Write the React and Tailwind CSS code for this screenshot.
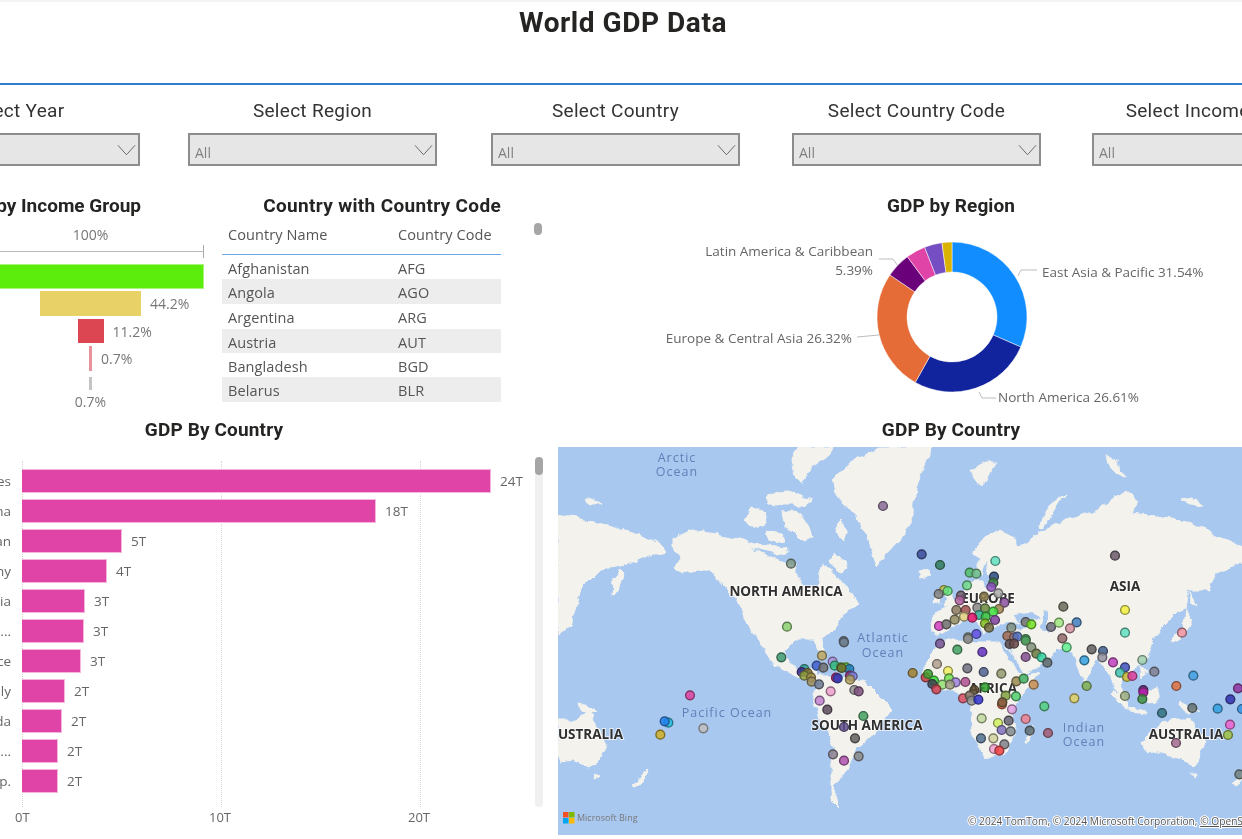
const din = "font-['Roboto','Liberation_Sans',sans-serif]";

const slicers = [
  { label: 'Select Year', cls: 'ml-[-109px]', all: false },
  { label: 'Select Region', cls: 'ml-[48px]', all: true },
  { label: 'Select Country', cls: 'ml-[54px]', all: true },
  { label: 'Select Country Code', cls: 'ml-[52px]', all: true },
  { label: 'Select Income Group', cls: 'ml-[51px]', all: true },
];

const tableRows = [
  ['Afghanistan', 'AFG', 'h-[24px]', ''],
  ['Angola', 'AGO', 'h-[25px]', 'bg-[#ededed]'],
  ['Argentina', 'ARG', 'h-[25px]', ''],
  ['Austria', 'AUT', 'h-[24px]', 'bg-[#ededed]'],
  ['Bangladesh', 'BGD', 'h-[24px]', ''],
  ['Belarus', 'BLR', 'h-[25px]', 'bg-[#ededed]'],
];

const bars = [
  ['United States', 469, '24T'], ['China', 354, '18T'], ['Japan', 100, '5T'], ['Germany', 85, '4T'],
  ['India', 63, '3T'], ['United Ki...', 62, '3T'], ['France', 59, '3T'], ['Italy', 43, '2T'],
  ['Canada', 40, '2T'], ['Russian...', 36, '2T'], ['Korea, Rep.', 36, '2T'],
];

const segments = [
  [31.54, '#118DFF'], [26.61, '#12239E'], [26.32, '#E66C37'], [5.39, '#6B007B'],
  [4.2, '#E044A7'], [3.8, '#744EC2'], [2.14, '#D9B300'],
];

function arc(cx, cy, R, r, a0, a1) {
  const p = (rad, a) => {
    const t = (a / 100) * 2 * Math.PI - Math.PI / 2;
    return `${(cx + rad * Math.cos(t)).toFixed(2)} ${(cy + rad * Math.sin(t)).toFixed(2)}`;
  };
  const large = a1 - a0 > 50 ? 1 : 0;
  return `M${p(R, a0)}A${R} ${R} 0 ${large} 1 ${p(R, a1)}L${p(r, a1)}A${r} ${r} 0 ${large} 0 ${p(r, a0)}Z`;
}

function Donut() {
  let acc = 0;
  const arcs = segments.map(([v, c]) => {
    const d = arc(952, 317, 75, 45, acc, acc + v);
    acc += v;
    return <path key={c} d={d} fill={c} stroke="#fff" strokeWidth="0.5" />;
  });
  const text = 'fill-[#666] text-[13.5px]';
  return (
    <svg viewBox="650 225 592 190" className="w-[592px] h-[190px] font-['Open_Sans',sans-serif]">
      {arcs}
      <g fill="none" stroke="#bdbdbd" strokeWidth="1">
        <path d="M1018 276L1021 270H1037" />
        <path d="M857 337L879 335" />
        <path d="M879 259H893L898 266" />
        <path d="M979 392L982 398H996" />
      </g>
      <text x="873" y="256" textAnchor="end" className={text}>Latin America &amp; Caribbean</text>
      <text x="873" y="275" textAnchor="end" className={text}>5.39%</text>
      <text x="1042" y="277" className={text}>East Asia &amp; Pacific 31.54%</text>
      <text x="852" y="343" textAnchor="end" className={text}>Europe &amp; Central Asia 26.32%</text>
      <text x="998" y="402" className={text}>North America 26.61%</text>
    </svg>
  );
}

const land = [
  // North America
  '674,537 690,530 710,533 730,537 745,540 760,545 785,548 795,560 796,572 803,585 818,588 820,572 823,565 832,570 839,580 850,590 858,603 843,613 837,622 833,630 822,638 823,652 819,652 815,640 795,640 785,650 790,665 802,672 812,668 817,672 815,676 832,676 845,678 845,681 825,680 800,678 775,665 760,645 757,637 746,623 743,610 726,587 713,573 699,570 683,573 673,568 681,557 674,547',
  // Greenland
  '832,480 852,462 880,447 932,447 928,455 916,487 912,520 899,540 885,555 876,567 872,555 865,530 850,510 838,495',
  // Arctic Canada
  '800,447 832,447 826,458 812,466 803,484 795,476 792,460',
  '765,497 785,490 812,500 805,505 785,505 770,503',
  '745,520 752,508 764,511 766,523 755,528',
  '782,512 796,511 808,524 812,536 802,540 792,530 784,526',
  '765,530 782,533 786,541 772,543',
  '840,520 848,530 844,543 835,534',
  '835,552 848,568 842,573 830,563',
  '585,498 592,500 600,503 590,506',
  // Far east Russia, wrapped left
  '558,515 575,518 590,522 610,527 640,535 655,542 666,552 650,555 625,565 600,570 590,580 580,590 575,610 570,625 558,635',
  '625,575 617,590 612,597 613,578 620,570',
  // Left Australia, NZ, Papua
  '558,720 575,720 589,711 596,725 607,745 600,760 589,767 572,760 558,762',
  '633,786 646,769 648,775 636,787',
  '576,702 590,707 596,713 585,712',
  '595,774 600,776 596,779',
  // Eurasia
  '972,553 986,537 999,530 1016,540 1019,547 1039,533 1066,520 1099,510 1126,490 1139,500 1132,513 1166,517 1192,523 1219,537 1242,547 1242,562 1216,573 1209,590 1189,590 1186,607 1176,613 1162,627 1152,640 1154,642 1146,659 1132,671 1121,676 1122,690 1129,706 1122,700 1114,688 1112,679 1099,659 1092,669 1084,682 1077,666 1072,652 1059,649 1046,661 1032,669 1022,676 1012,652 1011,642 1008,630 1030,628 1022,622 1005,622 985,632 978,622 965,618 955,627 938,635 930,630 934,612 945,607 955,600 965,590 975,580 985,580 976,570 980,560',
  // Africa
  '936,649 926,659 924,676 936,689 962,692 971,706 972,732 986,759 1006,752 1016,729 1012,709 1032,682 1040,672 1022,676 1009,649 999,642 976,642 959,639 939,642',
  '1026,742 1032,724 1034,732 1029,742',
  // South America
  '849,677 866,682 893,709 876,732 856,749 846,772 833,786 839,807 831,799 831,772 834,749 819,716 813,696 823,679',
  // Australia
  '1142,742 1152,729 1172,719 1189,719 1206,742 1194,767 1182,759 1159,752 1146,754',
  '1191,774 1197,774 1195,779',
  '1232,784 1242,773 1242,778 1236,786',
  // Indonesia, Philippines, Japan
  '1112,690 1130,708 1127,710 1110,695',
  '1130,708 1146,711 1146,713 1130,711',
  '1146,690 1158,688 1158,703 1148,704',
  '1179,702 1199,712 1190,714 1178,706',
  '1140,665 1146,672 1142,678',
  '1186,608 1192,622 1178,640 1172,642 1184,625',
  '1190,592 1196,606 1191,602',
  // Svalbard etc
  '971,470 985,463 996,463 990,472 982,487 975,478',
  '1039,527 1050,505 1066,493 1054,510 1043,528',
  '1106,457 1115,458 1125,477 1115,470 1108,465',
  '1182,500 1192,498 1202,505 1190,504',
  '1014,545 1018,547 1010,550',
  // UK, Ireland, Iceland
  '944,588 950,590 955,605 942,606 947,597',
  '936,595 941,596 940,604 934,603',
  '917,572 929,570 930,576 920,578',
];

const water = [
  '1012,614 1030,612 1040,620 1020,622',
  '986,562 992,585 984,588 981,575',
  '1043,610 1048,612 1048,632 1042,630',
  '1000,640 1012,655 1022,672 1017,672 1005,652',
  '750,548 770,552 790,562 775,558',
  '776,556 800,548 804,562 792,566',
  '806,549 820,555 822,562 810,560',
];

const z5 = [[981,198,'#8a6a9a'],[705,371,'#7f9a88'],[693,560,'#8cd070'],[863,603,'#708090']];
const z6 = [[68,343,'#3a4a9a'],[123,375,'#2f7a5a'],[289,363,'#5fe0c0'],[212,398,'#50c068'],[232,401,'#70c088'],[285,410,'#2a4a80'],[283,428,'#3a8040'],[204,436,'#70d888'],[277,441,'#8a50c0'],[298,460,'#aaaaaa'],[135,450,'#c0c040'],[146,453,'#60e080'],[119,462,'#808080'],[186,467,'#6a5a6a'],[182,481,'#b060a0'],[255,470,'#908050'],[316,488,'#8a50a0'],[235,503,'#888888'],[172,510,'#8a7a60'],[200,510,'#a05050'],[258,505,'#6a8a40'],[300,507,'#a08050'],[283,515,'#40e040'],[240,525,'#30b090'],[195,530,'#e0d080'],[220,533,'#e0106a'],[260,530,'#30c040'],[288,540,'#8040a0'],[167,539,'#908a60'],[120,558,'#d040c0'],[142,553,'#707070'],[258,550,'#80c020'],[270,563,'#706a40'],[337,563,'#809080'],[380,546,'#707070'],[397,553,'#70e020'],[456,561,'#6a6a7a'],[480,548,'#a0e880'],[493,500,'#6a6a5a'],[533,547,'#4080c0'],[513,565,'#d090a0'],[648,347,'#6a5a6a'],[678,510,'#f0f040'],[678,578,'#60e0c0'],[849,578,'#f090a0'],[207,592,'#809080'],[232,582,'#6050e0'],[325,588,'#a06a50'],[345,592,'#a07070'],[355,590,'#5070c0'],[380,597,'#40a050'],[490,595,'#906a6a']];
const z7 = [[676,55,'#3a9a70'],[798,50,'#c0a860'],[864,10,'#708090'],[830,68,'#b090e0'],[782,80,'#4060d0'],[836,80,'#30c080'],[802,86,'#707070'],[745,90,'#30a090'],[855,85,'#50c030'],[870,85,'#60d020'],[880,90,'#2080c0'],[857,87,'#707030'],[737,99,'#3a2a90'],[755,102,'#807030'],[745,110,'#90a040'],[765,115,'#a09040'],[767,128,'#a09060'],[882,110,'#a02080'],[890,112,'#8080e0'],[840,116,'#d01070'],[845,118,'#3040c0'],[882,122,'#b0a060'],[789,136,'#707a90'],[895,153,'#909090'],[908,157,'#805080'],[824,157,'#f0a0d0'],[791,185,'#c080d0'],[814,212,'#5a4a5a'],[922,231,'#40a060'],[864,264,'#605090'],[897,298,'#606060'],[831,346,'#8a8090'],[908,352,'#8a8a8a'],[864,365,'#b050b0'],[402,169,'#e040a0'],[337,251,'#20c0e0'],[326,247,'#2080f0'],[442,268,'#c0c0c0'],[313,287,'#d0b020']];
const z8 = [[123,14,'#705090'],[207,0,'#909090'],[175,32,'#40a060'],[250,39,'#6030c0'],[114,75,'#b0a090'],[41,102,'#a08030'],[147,96,'#f0f060'],[205,88,'#707080'],[254,99,'#506090'],[307,104,'#909a70'],[80,115,'#d04040'],[87,105,'#40a030'],[105,125,'#30e030'],[150,118,'#70e050'],[130,137,'#90e070'],[170,130,'#a080e0'],[153,137,'#a0a080'],[100,135,'#404050'],[112,151,'#d04050'],[199,129,'#b05090'],[226,153,'#5a4a30'],[258,145,'#30a030'],[352,127,'#9a8a50'],[374,119,'#40b060'],[404,137,'#d09050'],[320,170,'#80a040'],[351,172,'#50d070'],[192,178,'#e05060'],[212,170,'#807060'],[218,185,'#909090'],[238,182,'#3030d0'],[309,196,'#e06030'],[310,190,'#806040'],[339,211,'#e0a0e0'],[436,202,'#50d080'],[526,178,'#e0d060'],[563,141,'#80b050'],[248,238,'#c0d8a0'],[329,245,'#606070'],[380,240,'#f08090'],[297,252,'#d0f060'],[308,273,'#8070c0'],[335,277,'#808a90'],[392,275,'#5a6a70'],[447,282,'#a05a70'],[246,298,'#507090'],[283,298,'#d0d0a0'],[316,316,'#80808a'],[285,330,'#f0a0d0'],[301,335,'#f04040'],[380,54,'#805090'],[332,15,'#5a4a4a'],[345,14,'#6a4a4a'],[380,5,'#50a060'],[397,25,'#80907a'],[412,44,'#6a7a40'],[428,55,'#30d0a0'],[445,71,'#606a6a'],[503,25,'#60f090'],[578,31,'#606060'],[612,36,'#406090'],[610,55,'#9090a0'],[556,64,'#30a0e0'],[642,70,'#c040c0'],[678,85,'#4050c0'],[730,63,'#a0d0b0'],[766,98,'#808090'],[663,101,'#40c0b0'],[684,114,'#d0c030'],[700,111,'#e040a0'],[883,110,'#40a0e0'],[832,141,'#e07040'],[733,153,'#502070'],[733,160,'#c020b0'],[678,171,'#a0b080'],[730,180,'#409040'],[1017,148,'#9030a0'],[994,181,'#3030b0'],[880,207,'#607070'],[789,222,'#307080'],[956,209,'#30a0e0'],[1029,210,'#3090e0'],[993,257,'#f060d0'],[987,288,'#a0c040'],[831,312,'#a06a90'],[1021,406,'#708080']];

const toScreen = (list, bx, by) => list.map(([x, y, c]) => [bx + x / 3, by + y / 3, c]);
const dots = [
  ...toScreen(z5, 556, 440),
  ...toScreen(z6, 899, 440),
  ...toScreen(z7, 556, 639),
  ...toScreen(z8, 899, 639),
];

function darken(hex) {
  const n = parseInt(hex.slice(1), 16);
  const f = (v) => Math.round(v * 0.5 + 20);
  return `rgb(${f((n >> 16) & 255)},${f((n >> 8) & 255)},${f(n & 255)})`;
}

function WorldMap() {
  const ocean = 'fill-[#6080b8] text-[12.5px] tracking-[1px]';
  const cont = 'fill-[#2f2f2f] text-[13.5px] font-bold';
  return (
    <svg viewBox="558 447 684 388" className="block w-[684px] h-[388px] bg-[#a9c8f0] font-['Open_Sans',sans-serif] blur-[0.35px]">
      <defs>
        <filter id="coast" x="-5%" y="-5%" width="110%" height="110%">
          <feTurbulence type="fractalNoise" baseFrequency="0.09" numOctaves="3" seed="4" />
          <feDisplacementMap in="SourceGraphic" scale="7" xChannelSelector="R" yChannelSelector="G" />
          <feGaussianBlur stdDeviation="0.6" />
        </filter>
      </defs>
      <g filter="url(#coast)">
        {land.map((p) => <polygon key={p} points={p} fill="#f3f2ec" strokeLinejoin="round" stroke="#f3f2ec" strokeWidth="1" />)}
        {water.map((p) => <polygon key={p} points={p} fill="#a9c8f0" />)}
      </g>
      <g textAnchor="middle" className={ocean}>
        <text x="677" y="462">Arctic</text>
        <text x="677" y="476">Ocean</text>
        <text x="883" y="642">Atlantic</text>
        <text x="883" y="657">Ocean</text>
        <text x="727" y="717">Pacific Ocean</text>
        <text x="1084" y="732">Indian</text>
        <text x="1084" y="746">Ocean</text>
      </g>
      <g textAnchor="middle" className={cont} stroke="#fff" strokeWidth="2" paintOrder="stroke" strokeOpacity="0.7">
        <text x="786" y="596">NORTH AMERICA</text>
        <text x="1125" y="591">ASIA</text>
        <text x="988" y="603">EUROPE</text>
        <text x="993" y="693">AFRICA</text>
        <text x="867" y="730">SOUTH AMERICA</text>
        <text x="623" y="739" textAnchor="end">AUSTRALIA</text>
        <text x="1186" y="739">AUSTRALIA</text>
      </g>
      {dots.map(([x, y, c], i) => (
        <circle key={i} cx={x} cy={y} r="4.4" fill={c} fillOpacity="0.85" stroke={darken(c)} strokeWidth="1.4" />
      ))}
      <g>
        <rect x="563" y="812" width="5.5" height="5.5" fill="#f25022" />
        <rect x="569" y="812" width="5.5" height="5.5" fill="#7fba00" />
        <rect x="563" y="818" width="5.5" height="5.5" fill="#00a4ef" />
        <rect x="569" y="818" width="5.5" height="5.5" fill="#ffb900" />
        <text x="577" y="821" className="fill-[#777] text-[9px]">Microsoft Bing</text>
      </g>
      <text x="968" y="825" className="fill-[#555] text-[10.2px]" stroke="#fff" strokeWidth="2" paintOrder="stroke">
        © 2024 TomTom, © 2024 Microsoft Corporation, <tspan className="underline">© OpenStreetMap</tspan>
      </text>
    </svg>
  );
}

function Chevron() {
  return (
    <svg viewBox="0 0 20 12" className="w-[19px] h-[12px]" fill="none" stroke="#666" strokeWidth="1">
      <path d="M1 1L10 11L19 1" />
    </svg>
  );
}

function Slicer({ label, cls, all }) {
  return (
    <div className={`w-[249px] shrink-0 flex flex-col items-center ${cls}`}>
      <div className={`h-[28px] leading-[28px] text-[19px] text-[#333] tracking-[0.3px] whitespace-nowrap ${din}`}>{label}</div>
      <div className="mt-[8px] w-full h-[33px] bg-[#e6e6e6] border-2 border-[#8c8c8c] flex items-center justify-between pl-[5px] pr-[2px]">
        <span className="text-[14px] text-[#808080] pt-[5px] font-['Open_Sans',sans-serif]">{all ? 'All' : ''}</span>
        <Chevron />
      </div>
    </div>
  );
}

function FunnelRow({ w, h, color, label, cls }) {
  return (
    <div className={`grid grid-cols-[1fr_auto_1fr] items-center ${cls}`}>
      <div />
      <div className={`${w} ${h} ${color}`} />
      <div className="pl-[9px] text-[14px] text-[#777] whitespace-nowrap">{label}</div>
    </div>
  );
}

function Funnel() {
  return (
    <div className="w-[227px] ml-[-23px] shrink-0 font-['Open_Sans',sans-serif]">
      <div className={`ml-[-100px] h-[22px] leading-[22px] text-right pr-[63px] text-[19px] font-bold text-[#252423] whitespace-nowrap ${din}`}>GDP by Income Group</div>
      <div className="mt-[8px] h-[20px] leading-[20px] text-center text-[14px] text-[#777]">100%</div>
      <div className="h-[13px] flex items-center border-r border-[#aaa]">
        <div className="w-full h-[1px] bg-[#bbb]" />
      </div>
      <div className="mt-[6px] h-[25px] bg-[#5ced0c] border border-[#a8f47c]" />
      <FunnelRow cls="mt-[2px]" w="w-[101px]" h="h-[25px]" color="bg-[#e8d166]" label="44.2%" />
      <FunnelRow cls="mt-[3px]" w="w-[26px]" h="h-[24px]" color="bg-[#dc4552]" label="11.2%" />
      <FunnelRow cls="mt-[3px]" w="w-[3px]" h="h-[25px]" color="bg-[#e8929c]" label="0.7%" />
      <div className="mt-[6px] flex flex-col items-center">
        <div className="w-[3px] h-[13px] bg-[#c4c4c4]" />
        <div className="mt-[2px] text-[14px] leading-[20px] text-[#777]">0.7%</div>
      </div>
    </div>
  );
}

function CountryTable() {
  return (
    <div className="w-[279px] ml-[18px] shrink-0 font-['Open_Sans',sans-serif]">
      <div className={`h-[22px] leading-[22px] text-right text-[19px] font-bold text-[#252423] tracking-[0.33px] whitespace-nowrap ${din}`}>Country with Country Code</div>
      <div className="mt-[7px] h-[31px] flex items-start border-b border-[#69a8e6] text-[14.5px] tracking-[0.1px] text-[#555] pl-[6px]">
        <span className="w-[170px]">Country Name</span>
        <span>Country Code</span>
      </div>
      {tableRows.map(([name, code, h, bg]) => (
        <div key={code} className={`flex items-center pl-[6px] pt-[3px] text-[14.5px] tracking-[0.1px] text-[#555] ${h} ${bg}`}>
          <span className="w-[170px]">{name}</span>
          <span>{code}</span>
        </div>
      ))}
    </div>
  );
}

function BarChart() {
  return (
    <div className="relative w-[558px] h-[388px] shrink-0 font-['Open_Sans',sans-serif]">
      <div className="absolute left-[22px] top-[14px] h-[346px] border-l border-dotted border-[#d4d4d4]" />
      <div className="absolute left-[221px] top-[14px] h-[346px] border-l border-dotted border-[#d4d4d4]" />
      <div className="absolute left-[420px] top-[14px] h-[346px] border-l border-dotted border-[#d4d4d4]" />
      <div className="relative pt-[19px] flex flex-col">
        {bars.map(([name, w, val]) => (
          <div key={name} className="flex items-center h-[30px]">
            <div className="w-[80px] ml-[-69px] mr-[11px] text-right text-[13.5px] text-[#666] whitespace-nowrap shrink-0 flex justify-end">{name}</div>
            <div style={{ width: w }} className="h-[24px] bg-[#e044a7] border border-[#f5b5dd] border-l-0 shrink-0" />
            <div className="ml-[9px] text-[13.5px] text-[#666]">{val}</div>
          </div>
        ))}
      </div>
      <div className="absolute left-[535px] top-[10px] w-[8px] h-[350px] bg-[#f0f0f0] rounded-[4px]">
        <div className="w-[8px] h-[18px] bg-[#a6a6a6] rounded-[4px]" />
      </div>
      <div className="absolute left-[10px] top-[361px] flex text-[13px] text-[#666]">
        <span className="w-[199px] pl-[5px]">0T</span>
        <span className="w-[199px]">10T</span>
        <span>20T</span>
      </div>
    </div>
  );
}

export default function App() {
  return (
    <div className="w-[1242px] h-[839px] overflow-hidden bg-white blur-[0.3px]">
      <div className="h-[2px] bg-[#f4f4f4]" />
      <div className={`h-[81px] pl-[4px] pt-[3px] text-center text-[28px] leading-[36px] font-bold text-[#252423] tracking-[0.55px] ${din}`}>World GDP Data</div>
      <div className="h-[2px] bg-[#2f7fd0]" />
      <div className="flex mt-[12px] h-[81px] items-start">
        {slicers.map((s) => <Slicer key={s.label} {...s} />)}
      </div>
      <div className="flex h-[223px] mt-[17px]">
        <Funnel />
        <CountryTable />
        <div className="w-[8px] h-[12px] mt-[28px] ml-[33px] rounded-full bg-[#a6a6a6] shrink-0" />
        <div className="ml-[108px] flex flex-col shrink-0">
          <div className={`w-[602px] h-[22px] leading-[22px] text-center text-[19px] font-bold text-[#252423] tracking-[0.1px] ${din}`}>GDP by Region</div>
          <div className="mt-[8px]"><Donut /></div>
        </div>
      </div>
      <div className="flex">
        <div className="w-[558px] shrink-0">
          <div className={`h-[29px] pb-[5px] leading-[24px] pr-[130px] text-center text-[19px] font-bold text-[#252423] tracking-[0.15px] ${din}`}>GDP By Country</div>
          <BarChart />
        </div>
        <div className="w-[684px] shrink-0">
          <div className={`h-[29px] pb-[5px] pl-[102px] leading-[24px] text-center text-[19px] font-bold text-[#252423] tracking-[0.15px] ${din}`}>GDP By Country</div>
          <WorldMap />
        </div>
      </div>
    </div>
  );
}
